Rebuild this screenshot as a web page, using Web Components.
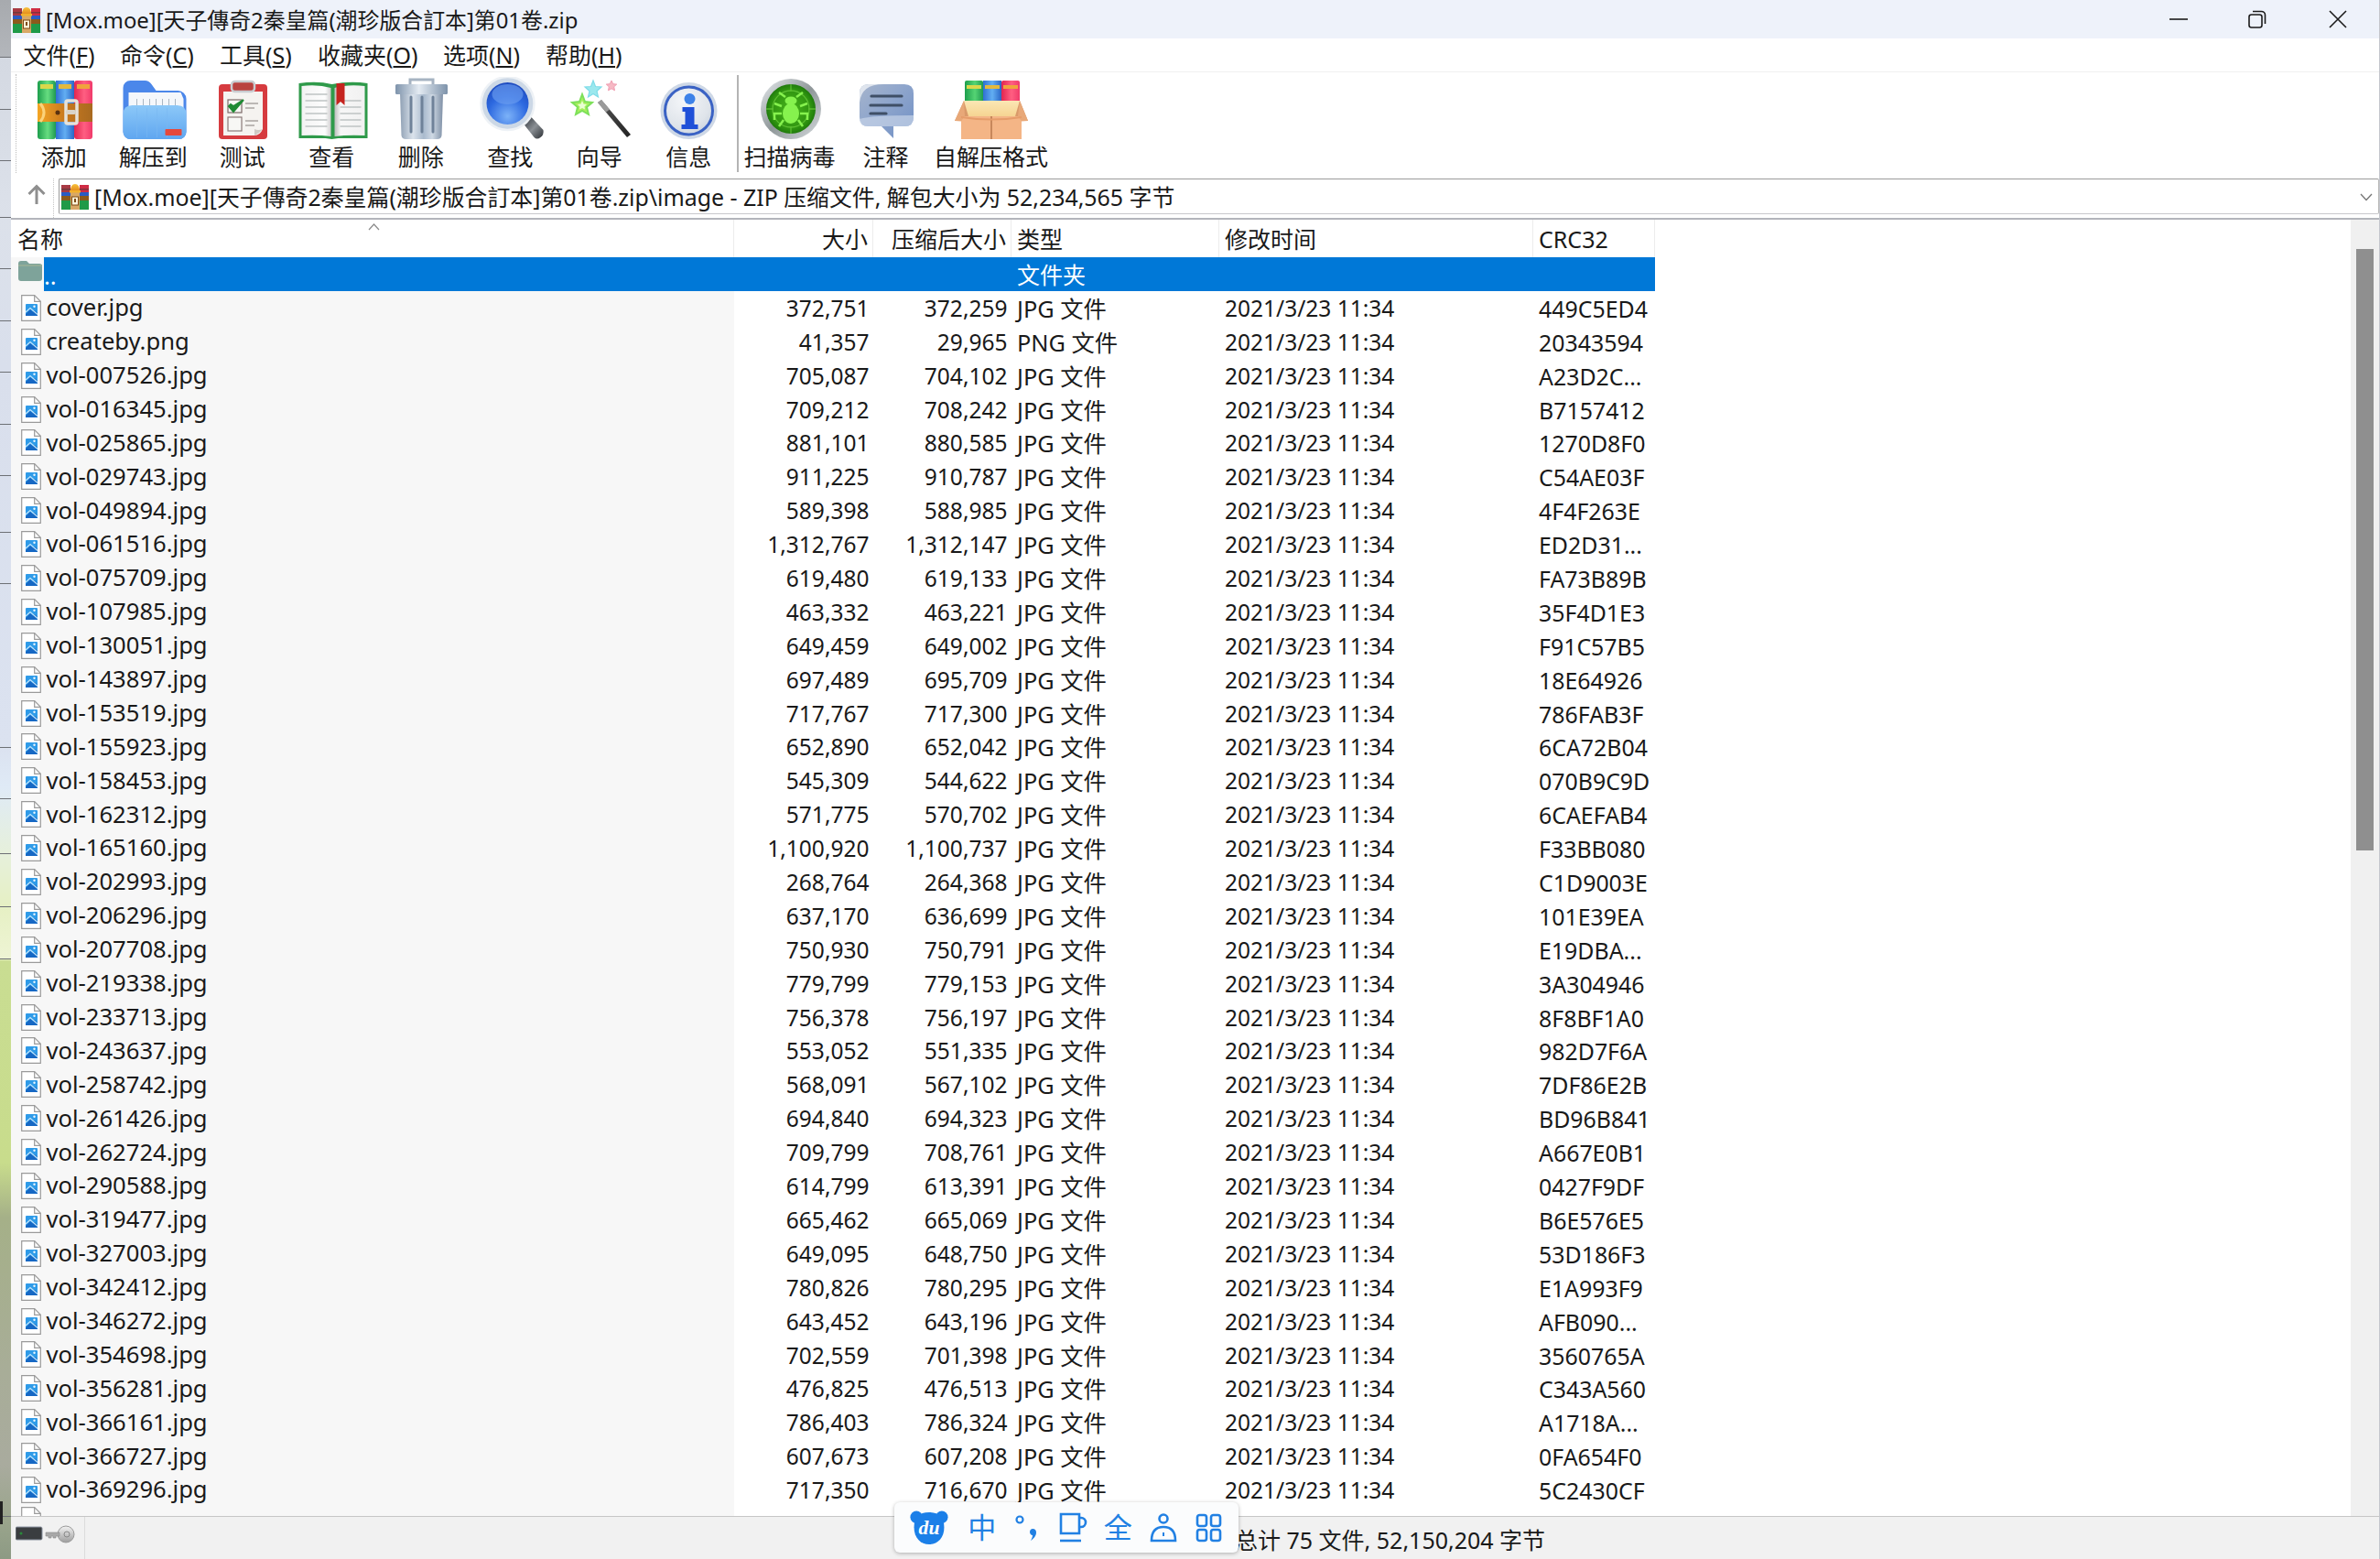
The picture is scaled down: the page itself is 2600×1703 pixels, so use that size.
<!DOCTYPE html>
<html lang="zh"><head><meta charset="utf-8"><title>WinRAR</title>
<style>
html,body{margin:0;padding:0;background:#fff}
body{font:24.5px/1.2 "Noto Sans","Noto Sans CJK SC",sans-serif;color:#191919;width:2600px;height:1703px;overflow:hidden}
</style></head><body>
<wr-app>
  <wr-desktop></wr-desktop>
  <wr-window>
    <wr-titlebar>[Mox.moe][天子傳奇2秦皇篇(潮珍版合訂本]第01卷.zip</wr-titlebar>
    <wr-menubar></wr-menubar>
    <wr-toolbar></wr-toolbar>
    <wr-addressbar>[Mox.moe][天子傳奇2秦皇篇(潮珍版合訂本]第01卷.zip\image - ZIP 压缩文件, 解包大小为 52,234,565 字节</wr-addressbar>
    <wr-filelist></wr-filelist>
    <wr-statusbar>总计 75 文件, 52,150,204 字节</wr-statusbar>
  </wr-window>
  <wr-ime></wr-ime>
</wr-app>
<script>
function def(name, css, html, init){
  customElements.define(name, class extends HTMLElement{
    connectedCallback(){
      if(this.shadowRoot) return;
      const r=this.attachShadow({mode:'open'});
      r.innerHTML='<style>'+css+'</style>'+(typeof html==='function'?html(this):html);
      if(init) init(this,r);
    }
  });
}
const rarMini=(w,h)=>`<svg width="${w}" height="${h}" viewBox="0 0 30 29"><defs>
<linearGradient id="hat" x2="0" y2="1"><stop offset="0" stop-color="#f8c23a"/><stop offset="1" stop-color="#e2861c"/></linearGradient></defs>
<rect x="0" y="2" width="10" height="8" fill="#a83a44"/><rect x="20" y="2" width="10" height="8" fill="#cf2c44"/>
<rect x="0" y="10" width="10" height="9" fill="#2a5cc4"/><rect x="20" y="10" width="10" height="9" fill="#2a5cc4"/>
<rect x="0" y="19" width="10" height="10" fill="#1f9a48"/><rect x="20" y="19" width="10" height="10" fill="#1f9a48"/>
<rect x="0" y="6" width="30" height="1.500" fill="#4a3a3a" opacity=".6"/>
<rect x="0" y="14" width="30" height="5" fill="#8c5a1c"/>
<rect x="10" y="9" width="10" height="20" fill="#d8a866"/>
<path d="M10 9q0-8 5-8t5 8z" fill="url(#hat)"/>
<rect x="9" y="8" width="12" height="2.500" fill="#f2b02c"/>
<rect x="11.500" y="15" width="7" height="9" fill="#fff3d8" stroke="#7a4a16" stroke-width="1"/>
<rect x="14" y="17" width="2" height="4" fill="#7a4a16"/></svg>`;

def('wr-app',':host{display:flex;width:2600px;height:1703px;position:relative;overflow:hidden}','<slot></slot>');

def('wr-desktop',`:host{display:block;flex:0 0 12px;height:1703px;position:relative;background:linear-gradient(180deg,
 #a7aaae 0,#b3b6bb 62px,#d4d9e2 63px,#dce1ea 236px,#d9dfec 400px,#dbe2f0 816px,#dfeaf6 860px,#e6f0dc 930px,#e6f0c4 990px,#eef4d4 1047px,#c9dd92 1050px,#c8dc8c 1270px,#a5b088 1330px,#a8ad98 1500px,#a9ab9e 1600px,#9aa58c 1660px,#8d9a84 1703px)}
 i{position:absolute;left:0;width:12px;height:1px;background:#6d7075}
 b{position:absolute;left:0;top:1640px;width:3px;height:25px;background:#222}`,
 [62,119,175,237,293,350,406,463,519,581,637,816,872,932,990,1047,1656].map(y=>`<i style="top:${y}px"></i>`).join('')+'<b></b>');

def('wr-window',':host{display:flex;flex-direction:column;flex:1;min-width:0;height:1703px;box-shadow:inset 1.5px 0 0 #76797e;border-right:1px solid #c4c6cc;box-sizing:border-box}','<slot></slot>');

def('wr-titlebar',`:host{display:flex;align-items:center;height:42px;flex:none;background:#eef2fa;padding-left:2px;box-sizing:border-box}
 svg{display:block}.ic{margin-right:6px;height:29px;margin-left:0}
 .t{flex:1;white-space:nowrap;margin-top:2px;font-size:23.9px}
 .c{display:flex;padding-right:2px}.c span{display:flex;width:87px;justify-content:center}`,
 `<div class="ic">${rarMini(30,29)}</div><div class="t"><slot></slot></div><div class="c">
 <span><svg width="20" height="20" viewBox="0 0 20 20"><path d="M0 10h20" stroke="#1b1b1b" stroke-width="1.6"/></svg></span>
 <span style="margin-left:-1px;margin-right:1px"><svg width="20" height="20" viewBox="0 0 20 20" fill="none" stroke="#1b1b1b" stroke-width="1.6"><rect x="1" y="5" width="14" height="14" rx="2.5"/><path d="M5 1.5h9.5a4 4 0 0 1 4 4V15"/></svg></span>
 <span><svg width="20" height="20" viewBox="0 0 20 20"><path d="M1 1l18 18M19 1L1 19" stroke="#1b1b1b" stroke-width="1.6"/></svg></span></div>`);

def('wr-menubar',`:host{display:flex;height:37px;flex:none;align-items:center;box-sizing:border-box;border-bottom:1.5px solid #f0f0f0;background:#fff;position:relative;font-size:25px}
 span{position:absolute;white-space:nowrap;top:3px}u{text-underline-offset:2px}`,
 [[13.5,'文件(','F'],[119,'命令(','C'],[228,'工具(','S'],[335,'收藏夹(','O'],[472,'选项(','N'],[584,'帮助(','H']].map(m=>`<span style="left:${m[0]}px">${m[1]}<u>${m[2]}</u>)</span>`).join(''));

/* toolbar icons are drawn in page coordinates through the viewBox */
const ICONS={
add:`<defs>
<linearGradient id="g"><stop offset="0" stop-color="#1d9e4c"/><stop offset=".55" stop-color="#66dd80"/><stop offset="1" stop-color="#1f9a50"/></linearGradient>
<linearGradient id="b"><stop offset="0" stop-color="#2f6fd2"/><stop offset=".5" stop-color="#62aef2"/><stop offset="1" stop-color="#2a66c6"/></linearGradient>
<linearGradient id="r"><stop offset="0" stop-color="#e2254f"/><stop offset=".55" stop-color="#ff5f82"/><stop offset="1" stop-color="#f03a6a"/></linearGradient>
<linearGradient id="bl"><stop offset="0" stop-color="#f4a524"/><stop offset=".5" stop-color="#c8791f"/><stop offset="1" stop-color="#a96a20"/></linearGradient></defs>
<rect x="41" y="88" width="20" height="64" rx="3" fill="url(#g)"/><rect x="61" y="88" width="20" height="64" fill="url(#b)"/><rect x="81" y="88" width="20" height="64" rx="3" fill="url(#r)"/>
<rect x="44" y="92" width="14" height="5" fill="#d9d84a"/><rect x="64" y="92" width="14" height="5" fill="#e2b93e"/><rect x="84" y="92" width="14" height="5" fill="#f0a33c"/>
<rect x="41" y="113" width="60" height="20" fill="url(#bl)"/><path d="M44 113q8 10 0 20" stroke="#fbd27a" stroke-width="3" fill="none"/>
<circle cx="63" cy="123" r="2.5" fill="#5a3210"/><rect x="72" y="110" width="12" height="25" rx="2" fill="none" stroke="#e6e2da" stroke-width="3.5"/><rect x="72" y="120" width="11" height="5" rx="2" fill="#d9d4ca"/>`,
ext:`<defs><linearGradient id="f" x2="0" y2="1"><stop offset="0" stop-color="#8cc8f8"/><stop offset="1" stop-color="#5fa6f0"/></linearGradient></defs>
<path d="M134 96a8 8 0 0 1 8-8h16q4 0 7 4l5 7h24a9 9 0 0 1 9 9v36a8 8 0 0 1-8 8h-53a8 8 0 0 1-8-8z" fill="#4b87ea"/>
<path d="M140 101h57l3 7v20h-60z" fill="#f4f7fb"/>
<g stroke="#aab6c2" stroke-width="1"><path d="M149 108v8M156 108v8M163 108v8M170 108v8M177 108v8M184 108v8M191 108v8"/></g>
<path d="M134 125q0-10 10-10h49q10 0 10 10v19a8 8 0 0 1-8 8h-53a8 8 0 0 1-8-8z" fill="url(#f)"/>
<g stroke="#7ab8f2" stroke-width="1" opacity=".6"><path d="M149 118v32M160 118v32M171 118v32M182 118v32"/></g>
<rect x="180" y="141" width="18" height="7" rx="1" fill="#e5483c"/>`,
test:`<rect x="239" y="92" width="53" height="60" rx="4" fill="#d63b3f"/>
<path d="M244 100h43v41q-3 7-9 7h-34z" fill="#f5f3f0"/><path d="M278 148q5-2 9-7q-5 2-9 0z" fill="#cfcac4"/>
<rect x="253" y="89" width="25" height="11" rx="3.5" fill="#b9423f" stroke="#c9ccd0" stroke-width="2.5"/>
<rect x="249" y="109" width="15" height="14" fill="#f7f7f5" stroke="#7c6a68" stroke-width="1.2"/><path d="M250 116l5 6 11-13-11 7-3-2z" fill="#1f8a34" stroke="#1f8a34" stroke-width="2"/>
<rect x="249" y="128" width="15" height="15" fill="#f7f7f5" stroke="#8a7a78" stroke-width="1.2"/>
<path d="M268 113h14M268 118h10M268 132h14M268 137h10" stroke="#a9a5a1" stroke-width="1.4"/>`,
view:`<defs><linearGradient id="p"><stop offset="0" stop-color="#f3f3f3"/><stop offset=".8" stop-color="#fdfdfd"/><stop offset="1" stop-color="#cfcfcf"/></linearGradient>
<linearGradient id="q"><stop offset="0" stop-color="#bdbdbd"/><stop offset=".2" stop-color="#f7f7f7"/><stop offset="1" stop-color="#f1f1f1"/></linearGradient></defs>
<path d="M326 91q20-3 36 1q20-4 39-1v60h-32l-7 1-7-1h-29z" fill="#2f9a4a"/>
<path d="M329 94q18-2 32 2v53q-14-2-32-1z" fill="url(#p)"/><path d="M365 96q14-4 33-2v54q-18-1-33 1z" fill="url(#q)"/>
<path d="M333 103h24M333 110h24M333 117h24M333 124h24M333 131h24M333 138h24M371 110h23M371 117h23M371 124h23M371 131h23M371 138h23" stroke="#bfc3c3" stroke-width="1.3"/>
<path d="M367 91h9v24l-4.500-4-4.500 4z" fill="#c5241f"/>`,
del:`<defs><linearGradient id="t"><stop offset="0" stop-color="#8fa0b4"/><stop offset=".3" stop-color="#dbe3ec"/><stop offset=".55" stop-color="#a9bacd"/><stop offset=".75" stop-color="#cfd9e4"/><stop offset="1" stop-color="#7f90a6"/></linearGradient>
<linearGradient id="l"><stop offset="0" stop-color="#7e93ab"/><stop offset=".45" stop-color="#e4ebf2"/><stop offset="1" stop-color="#7e93ab"/></linearGradient></defs>
<path d="M448 92v-5h25v5" fill="none" stroke="#a6b3c2" stroke-width="3"/>
<path d="M437 102h47l-1.500 46q-.5 4-5 4h-34q-4.500 0-5-4z" fill="url(#t)"/>
<rect x="432" y="92" width="57" height="11" rx="1.500" fill="url(#l)"/>
<path d="M449 106v38M461 106v38M473 106v38" stroke="#6f8299" stroke-width="3" stroke-linecap="round"/>`,
find:`<defs><radialGradient id="s" cx=".5" cy=".8" r=".85"><stop offset="0" stop-color="#7cb2f8"/><stop offset=".55" stop-color="#2d69e0"/><stop offset="1" stop-color="#1b45b8"/></radialGradient>
<linearGradient id="h" x2="1" y2="1"><stop offset="0" stop-color="#30353b"/><stop offset=".5" stop-color="#8b9095"/><stop offset="1" stop-color="#2a2e33"/></linearGradient></defs>
<path d="M572 136l8-8 13 14q1 5-3 8t-7 0z" fill="url(#h)"/>
<circle cx="554" cy="113" r="29" fill="#ccd8e6"/><circle cx="554" cy="113" r="29" fill="none" stroke="#eef2f6" stroke-width="2.500"/><circle cx="554" cy="113" r="23" fill="url(#s)"/><ellipse cx="554" cy="103" rx="17" ry="11" fill="#6a9cf0" opacity=".65"/>`,
wiz:`<defs><linearGradient id="w" x1="0" y1="0" x2="1" y2="1"><stop offset="0" stop-color="#8a8a8a"/><stop offset=".35" stop-color="#444"/><stop offset="1" stop-color="#222"/></linearGradient></defs>
<path d="M636 103l3 8 8 1-6 5 2 8-7-4-7 4 2-8-6-5 8-1z" fill="#a8f05c" stroke="#7de05a" stroke-width="2"/><path d="M636 110l1.500 3.500 3.500.5-2.500 2.500.5 3-3-1.500-3 1.500.5-3-2.500-2.500 3.500-.5z" fill="#e9ffd2"/>
<path d="M648 88l2.500 6.500 6.500.5-5 4.500 1.500 6.500-5.500-3.500-5.500 3.500 1.500-6.500-5-4.500 6.500-.5z" fill="#9be8ee" stroke="#7fdce8" stroke-width="1.200"/>
<path d="M668 88l1.700 3.700 4 .4-3 2.700.8 4-3.500-2-3.500 2 .8-4-3-2.700 4-.4z" fill="#f6b9c4" stroke="#f09cb0"/>
<path d="M653 112l4-3 32 38-4 3z" fill="url(#w)"/><path d="M653 112l4-3 9 10.500-4 3z" fill="#9a9a9a"/>`,
info:`<defs><radialGradient id="i" cx=".4" cy=".3" r=".9"><stop offset="0" stop-color="#f4f6f9"/><stop offset=".6" stop-color="#dfe4ea"/><stop offset="1" stop-color="#bcc8d8"/></radialGradient></defs>
<circle cx="752" cy="121" r="31" fill="#ced8e6"/><circle cx="752" cy="121" r="26" fill="url(#i)" stroke="#3a62c4" stroke-width="3"/>
<circle cx="753" cy="108" r="6" fill="#3d82e8"/><path d="M745 117h13v19h4v5h-18v-5h4v-14h-3z" fill="#1f50d8"/>`,
scan:`<defs><linearGradient id="r2" x2="1" y2="1"><stop offset="0" stop-color="#e8ecef"/><stop offset=".5" stop-color="#8f9799"/><stop offset="1" stop-color="#d7dcdf"/></linearGradient>
<radialGradient id="d"><stop offset="0" stop-color="#48b41c"/><stop offset=".8" stop-color="#2f9410"/><stop offset="1" stop-color="#1f7a0c"/></radialGradient></defs>
<circle cx="863" cy="119" r="33" fill="url(#r2)"/><circle cx="863" cy="119" r="27" fill="url(#d)"/>
<g stroke="#6fd040" stroke-width="1.300" opacity=".7"><circle cx="863" cy="119" r="20" fill="none"/><path d="M863 92v8M863 138v8M836 119h8M882 119h8"/></g>
<g fill="#86f24e"><ellipse cx="863" cy="124" rx="9" ry="11"/><ellipse cx="863" cy="110" rx="6.500" ry="4.500"/></g>
<path d="M857 106l-7-5M869 106l7-5M853 116l-8-3M873 116l8-3M853 124h-8v7M873 124h8v7M855 131l-5 7M871 131l5 7" stroke="#86f24e" stroke-width="2.500" fill="none"/>`,
note:`<defs><linearGradient id="n" x1="0" y1="0" x2="1" y2="1"><stop offset="0" stop-color="#a5b4cc"/><stop offset=".45" stop-color="#8ea5cc"/><stop offset="1" stop-color="#6f8fc4"/></linearGradient></defs>
<path d="M948 92h39q10 0 10 10v26q0 10-10 10h-12v13l-13-13h-14q-10 0-10-10v-26q0-10 10-10z" fill="url(#n)"/>
<path d="M938 112q2-20 26-20h-16q-10 0-10 10z" fill="#dfe5ee"/><path d="M938 130q14-4 59-4v2q0 10-10 10h-39q-10 0-10-8z" fill="#c7d4e8" opacity=".7"/>
<path d="M951 105h33M950 115h34M950 124h17" stroke="#3f4f66" stroke-width="3.200" stroke-linecap="round"/>`,
sfx:`<defs>
<linearGradient id="g2"><stop offset="0" stop-color="#1d9e4c"/><stop offset=".55" stop-color="#55d474"/><stop offset="1" stop-color="#1f9a50"/></linearGradient>
<linearGradient id="b2"><stop offset="0" stop-color="#2f6fd2"/><stop offset=".5" stop-color="#62aef2"/><stop offset="1" stop-color="#2a66c6"/></linearGradient>
<linearGradient id="r2b"><stop offset="0" stop-color="#e2254f"/><stop offset=".55" stop-color="#ff5f82"/><stop offset="1" stop-color="#f03a6a"/></linearGradient>
<linearGradient id="c" x2="0" y2="1"><stop offset="0" stop-color="#fbe7b4"/><stop offset="1" stop-color="#f5d28e"/></linearGradient></defs>
<rect x="1053" y="88" width="20" height="34" rx="2" fill="url(#g2)"/><rect x="1073" y="88" width="20" height="34" fill="url(#b2)"/><rect x="1093" y="88" width="20" height="34" rx="2" fill="url(#r2b)"/>
<rect x="1055" y="93" width="16" height="4" fill="#d9d84a"/><rect x="1075" y="93" width="16" height="4" fill="#e2b93e"/><rect x="1095" y="93" width="16" height="4" fill="#f0a33c"/>
<path d="M1052 110h61l9 22h-80z" fill="#d99a6a"/><path d="M1052 110h61l-5 17q-25 4-51 0z" fill="url(#c)"/>
<path d="M1049 127h66v25h-66z" fill="#f4b586"/><path d="M1052 110l-10 22 7 .5 4-6zM1113 110l9 22-7 .5-4-6z" fill="#e8a878"/>
<path d="M1082 127v25" stroke="#b9794c" stroke-width="1.500"/><path d="M1049 127q33 5 66 0v2q-33 5-66 0z" fill="#e59c6a"/>`
};
def('wr-toolbar',`:host{display:flex;flex:none;height:113.5px;box-sizing:border-box;padding-left:9px;background:#fff;position:relative;font-size:25px}
 .grip{position:absolute;left:5px;top:2px;height:108px;border-left:1.500px dotted #bcbcbc}
 .sep{flex:none;width:1.500px;background:#b4b4b4;margin:3px 2px 3px 4px;height:106px}
 .b{flex:none;display:flex;flex-direction:column;align-items:center;white-space:nowrap}
 svg{display:block;flex:none;margin-top:5px}
 .l{margin-top:1.5px;height:30px;line-height:30px}`,
 ()=>{
  const items=[['add','添加',21,97.5],['ext','解压到',118.5,97.5],['test','测试',216,97.5],['view','查看',313.5,97.5],['del','删除',411,97.5],['find','查找',508.5,97.5],['wiz','向导',606,97.5],['info','信息',703.5,97.5],null,['scan','扫描病毒',808,108],['note','注释',916,102],['sfx','自解压格式',1018,128]];
  return '<div class="grip"></div>'+items.map(i=>!i?'<div class="sep"></div>':`<div class="b" style="width:${i[3]}px"><svg width="${i[3]}" height="70" viewBox="${i[2]} 84 ${i[3]} 70">${ICONS[i[0]]}</svg><div class="l">${i[1]}</div></div>`).join('');
 });

def('wr-addressbar',`:host{display:flex;flex:none;height:47.500px;box-sizing:border-box;background:#fff;position:relative;padding:2.500px 0 4.500px 52px;border-bottom:2px solid #b3b5bb}
 .up{position:absolute;left:17px;top:8px}
 .grip{position:absolute;left:46px;top:2px;height:43px;border-left:1.500px dotted #c4c4c4}
 .box{flex:1;display:flex;align-items:center;border:1.500px solid #9b9b9b;border-right-color:#b8b8b8;border-bottom-color:#c8c8cc;border-radius:2px;padding-left:2px;min-width:0;box-sizing:border-box}
 .t{flex:1;margin-left:6px;padding-top:3px;white-space:nowrap;overflow:hidden;font-size:24.9px}
 .ch{margin:3px 6px 0 0}svg{display:block}`,
 `<svg class="up" width="22" height="22" viewBox="0 0 22 22" fill="none" stroke="#8f8f8f" stroke-width="3"><path d="M11 22V3M2.500 11L11 2.500 19.500 11"/></svg><div class="grip"></div>
 <div class="box">${rarMini(30,29)}<div class="t"><slot></slot></div>
 <svg class="ch" width="14" height="9" viewBox="0 0 14 9" fill="none" stroke="#767676" stroke-width="1.300"><path d="M1 1l6 6.500L13 1"/></svg></div>`);

const COLS='790px 152px 151px 227px 343px 133px';
def('wr-header',`:host{display:grid;grid-template-columns:${COLS};height:41px;flex:none;background:#fff;position:relative;width:max-content;font-size:25px}
 div{display:flex;align-items:center;padding:0 6px;box-sizing:border-box;border-right:1px solid #ececec;white-space:nowrap}
 .r{justify-content:flex-end;padding-right:5px}
 div:first-of-type{padding-left:7px}
 svg{position:absolute;left:390px;top:4px}`,
 `<svg width="13" height="8" viewBox="0 0 13 8" fill="none" stroke="#8a8a8a" stroke-width="1.200"><path d="M1 7l5.500-6L12 7"/></svg>
 <div>名称</div><div class="r">大小</div><div class="r">压缩后大小</div><div>类型</div><div>修改时间</div><div>CRC32</div>`);

const fileIcon=`<svg class="fi" width="22" height="29" viewBox="0 0 22 29"><path d="M.7.7h14l6.600 6.600v21H.7z" fill="#fff" stroke="#9a9a9a" stroke-width="1.200"/><path d="M14.700.7v6.600h6.600" fill="none" stroke="#9a9a9a" stroke-width="1.200"/>
<rect x="5" y="10" width="13" height="13" rx="1" fill="#2f9be8"/><path d="M5 21l5-5 3 2.500 2-1.500 3 3v3H5z" fill="#1668c4"/><path d="M5 19l5-4.500 8 7" fill="none" stroke="#bfe4fb" stroke-width="1.200"/><circle cx="14.500" cy="12.800" r="1.200" fill="#eaf6ff"/></svg>`;
def('wr-row',`:host{display:grid;grid-template-columns:${COLS};height:36.900px;width:max-content;position:relative;white-space:nowrap}
 .n{display:flex;align-items:center;background:#f7f7f7;padding-left:11px;box-sizing:border-box}
 .n span{margin-left:5.500px;padding-top:.5px;font-size:25.6px}
 .c{padding:1px 4.500px 0 6px;box-sizing:border-box;line-height:36.900px;overflow:hidden}
 .ty{font-size:25.3px}.k{font-size:24.9px}
 :host([sel]) .ty{font-size:25px}
 .r{text-align:right}
 :host([sel]) .n{background:linear-gradient(90deg,#f7f7f7 36px,#0078d7 36px);color:#fff}
 :host([sel]) .c{background:#0078d7;color:#fff}
 .fo{margin:-6px 2px 0 -3px;flex:none;display:block}
 .n .dots{margin-left:0;padding-top:5px}`,
 h=>{
  const g=a=>h.getAttribute(a)||'';
  const sel=h.hasAttribute('sel');
  const ic=sel?`<svg class="fo" width="26" height="22" viewBox="0 0 26 22"><path d="M0 3q0-3 3-3h6l3 3h11q3 0 3 3v13q0 3-3 3H3q-3 0-3-3z" fill="#7ea39a"/><path d="M0 5h26" stroke="#93ad97" stroke-width="2"/></svg>`:fileIcon;
  return `<div class="n">${ic}<span class="${sel?'dots':''}">${g('n')}</span></div><div class="c r">${g('s')}</div><div class="c r">${g('p')}</div><div class="c ty">${g('t')}</div><div class="c">${g('m')}</div><div class="c k">${g('k')}</div>`;
 });

const DATA=`cover.jpg|372,751|372,259|449C5ED4
createby.png|41,357|29,965|20343594
vol-007526.jpg|705,087|704,102|A23D2C...
vol-016345.jpg|709,212|708,242|B7157412
vol-025865.jpg|881,101|880,585|1270D8F0
vol-029743.jpg|911,225|910,787|C54AE03F
vol-049894.jpg|589,398|588,985|4F4F263E
vol-061516.jpg|1,312,767|1,312,147|ED2D31...
vol-075709.jpg|619,480|619,133|FA73B89B
vol-107985.jpg|463,332|463,221|35F4D1E3
vol-130051.jpg|649,459|649,002|F91C57B5
vol-143897.jpg|697,489|695,709|18E64926
vol-153519.jpg|717,767|717,300|786FAB3F
vol-155923.jpg|652,890|652,042|6CA72B04
vol-158453.jpg|545,309|544,622|070B9C9D
vol-162312.jpg|571,775|570,702|6CAEFAB4
vol-165160.jpg|1,100,920|1,100,737|F33BB080
vol-202993.jpg|268,764|264,368|C1D9003E
vol-206296.jpg|637,170|636,699|101E39EA
vol-207708.jpg|750,930|750,791|E19DBA...
vol-219338.jpg|779,799|779,153|3A304946
vol-233713.jpg|756,378|756,197|8F8BF1A0
vol-243637.jpg|553,052|551,335|982D7F6A
vol-258742.jpg|568,091|567,102|7DF86E2B
vol-261426.jpg|694,840|694,323|BD96B841
vol-262724.jpg|709,799|708,761|A667E0B1
vol-290588.jpg|614,799|613,391|0427F9DF
vol-319477.jpg|665,462|665,069|B6E576E5
vol-327003.jpg|649,095|648,750|53D186F3
vol-342412.jpg|780,826|780,295|E1A993F9
vol-346272.jpg|643,452|643,196|AFB090...
vol-354698.jpg|702,559|701,398|3560765A
vol-356281.jpg|476,825|476,513|C343A560
vol-366161.jpg|786,403|786,324|A1718A...
vol-366727.jpg|607,673|607,208|0FA654F0
vol-369296.jpg|717,350|716,670|5C2430CF`.split('\n').map(l=>l.split('|'));

def('wr-filelist',`:host{display:flex;flex:1;min-height:0;background:#fff;overflow:hidden}
 .m{flex:1;min-width:0;display:flex;flex-direction:column;overflow:hidden}`,
 `<div class="m"><wr-header></wr-header><wr-row sel n=".." t="文件夹"></wr-row>`+
 DATA.map(d=>`<wr-row n="${d[0]}" s="${d[1]}" p="${d[2]}" t="${d[0].endsWith('png')?'PNG':'JPG'} 文件" m="2021/3/23 11:34" k="${d[3]}"></wr-row>`).join('')+
 `<wr-row></wr-row></div><wr-scrollbar></wr-scrollbar>`);

def('wr-scrollbar',`:host{display:block;flex:none;width:31px;background:#f0f0f0;padding:32px 6px 0;box-sizing:border-box}
 div{height:657px;background:#8f8f8f}`,'<div></div>');

def('wr-statusbar',`:host{display:flex;flex:none;height:47px;box-sizing:border-box;background:#f1f1f1;border-top:1.500px solid #c6c6c6;align-items:center;position:relative;font-size:25px}
 .a{flex:none;width:80px;height:100%;border-right:1px solid #dcdcdc;display:flex;align-items:center;padding-left:4px;box-sizing:border-box;margin-right:1256px;margin-left:1px}
 svg{display:block;margin-top:-8px}.t{white-space:nowrap;margin-left:0;padding-top:3px}`,
 `<div class="a"><svg width="66" height="20" viewBox="0 0 66 20"><defs><linearGradient id="k" x2="0" y2="1"><stop offset="0" stop-color="#f2f2f2"/><stop offset="1" stop-color="#9d9d9d"/></linearGradient></defs>
 <rect x="0" y="2" width="29" height="14" rx="1.500" fill="#3a3d40" stroke="#8a93a0"/><circle cx="6" cy="9" r="1.500" fill="#2a8a3a"/>
 <circle cx="55" cy="10" r="9" fill="url(#k)" stroke="#999"/><circle cx="56" cy="10" r="3" fill="none" stroke="#888"/><path d="M33 8h15v4h-4v2h-3v-2h-2v2h-3v-2h-3z" fill="#a8a8a8" stroke="#8a8a8a" stroke-width=".6"/></svg></div>
 <div class="t"><slot></slot></div>`);

def('wr-ime',`:host{position:absolute;left:977px;top:1641px;width:376px;height:55px;background:#fbfcfd;border-radius:6px;box-shadow:0 1px 4px rgba(0,0,0,.28);display:flex;align-items:center;padding-left:15px;box-sizing:border-box;color:#2180e3}
 .bear{flex:none;width:46px;margin-right:10px;display:flex;justify-content:center}
 .c{flex:none;width:49.500px;display:flex;justify-content:center;align-items:center;font-size:31px;line-height:1;height:38px}
 svg{display:block}text{font-family:"Liberation Serif",serif;font-style:italic;font-weight:700;font-size:21px;fill:#fff}`,
 `<div class="bear"><svg width="44" height="37" viewBox="0 0 42 36"><circle cx="7.500" cy="7" r="6.500" fill="#1b7fe8"/><circle cx="34.500" cy="7" r="6.500" fill="#1b7fe8"/><path d="M21 2c11 0 16 6 16 16 0 11-7 18-16 18S5 29 5 18C5 8 10 2 21 2z" fill="#1b7fe8"/><text x="21" y="25" text-anchor="middle">du</text></svg></div>
 <div class="c">中</div>
 <div class="c"><svg width="28" height="32" viewBox="0 0 28 32" fill="none" stroke="#2180e3"><circle cx="6" cy="7" r="3.500" stroke-width="2.200"/><path d="M20 17c3 0 4 2 4 4 0 4-3 7-6 9 1-2 2-4 2-6-2 0-3-2-3-3.500 0-2 1.500-3.500 3-3.500z" fill="#2180e3" stroke="none"/></svg></div>
 <div class="c"><svg width="32" height="34" viewBox="0 0 32 34" fill="none" stroke="#2180e3" stroke-width="2.600"><path d="M3 2h20v21H3z"/><path d="M23 6h2a5 5 0 0 1 5 5v0a5 5 0 0 1-5 5h-2"/><path d="M2 31h23"/></svg></div>
 <div class="c">全</div>
 <div class="c"><svg width="30" height="32" viewBox="0 0 30 32" fill="none" stroke="#2180e3" stroke-width="2.600"><circle cx="15" cy="6" r="4.500"/><path d="M2 30q0-15 13-15t13 15z"/><path d="M15 21v4" stroke-width="2"/></svg></div>
 <div class="c"><svg width="29" height="32" viewBox="0 0 29 32" fill="none" stroke="#2180e3" stroke-width="2.600"><rect x="2" y="2" width="10" height="12" rx="2.500"/><rect x="17" y="2" width="10" height="12" rx="2.500"/><rect x="2" y="18" width="10" height="12" rx="2.500"/><rect x="17" y="18" width="10" height="12" rx="2.500"/></svg></div>`);
</script>
</body></html>
